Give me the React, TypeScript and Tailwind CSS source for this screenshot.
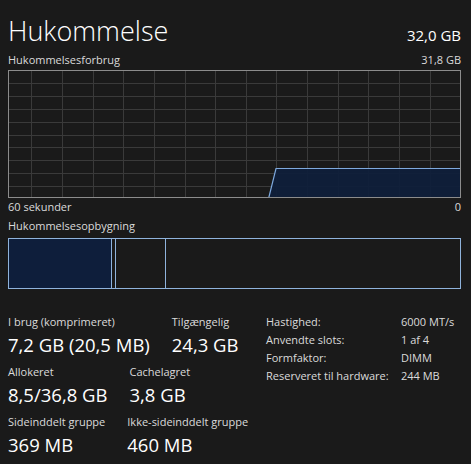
import React from 'react';

const font = { fontFamily: '"Open Sans", "Noto Sans", sans-serif' };

const Stat = ({ label, value }: { label: string; value: string }) => (
    <div className="flex flex-col">
        <span className="text-[11px] leading-[16px] text-[#dadada]">{label}</span>
        <span className="mt-[2px] text-[18.5px] leading-[26px] text-white">{value}</span>
    </div>
);

const UsageGraph = () => {
    const cols = [23, 54, 85, 115, 146, 177, 207, 238, 268, 299, 330, 360, 391, 422];
    const rows = [13, 26, 39, 52, 65, 77, 90, 103, 116];
    return (
        <svg width="453" height="128" className="block">
            {cols.map((x) => (
                <line key={'c' + x} x1={x + 0.5} y1="0" x2={x + 0.5} y2="128" stroke="#3a3a3a" strokeWidth="1" />
            ))}
            {rows.map((y) => (
                <line key={'r' + y} x1="0" y1={y + 0.5} x2="453" y2={y + 0.5} stroke="#3a3a3a" strokeWidth="1" />
            ))}
            <polygon points="260.7,128 268,98.5 453,98.5 453,128" fill="#0e1e3b" fillOpacity="0.92" />
            <polyline points="260.7,128 268,98.5 453,98.5" fill="none" stroke="#7ea9dd" strokeWidth="1.2" />
            <rect x="0.5" y="0.5" width="452" height="127" fill="none" stroke="#8c8c8c" strokeWidth="1" />
        </svg>
    );
};

const App: React.FC = () => {
    return (
        <div className="w-[471px] h-[464px] bg-[#1a1a1a] pl-[8px] pr-[10px] overflow-hidden" style={font}>
            <div className="flex items-baseline justify-between pt-[13px]">
                <span className="text-[27px] leading-[36px] font-light text-white">Hukommelse</span>
                <span className="text-[15px] leading-[20px] text-white">32,0 GB</span>
            </div>
            <div className="mt-[3px] flex justify-between text-[11px] leading-[16px] text-[#dadada]">
                <span>Hukommelsesforbrug</span>
                <span>31,8 GB</span>
            </div>
            <div className="mt-[2px]">
                <UsageGraph />
            </div>
            <div className="mt-[1px] flex justify-between text-[11px] leading-[16px] text-[#dadada]">
                <span>60 sekunder</span>
                <span>0</span>
            </div>
            <div className="mt-[3px] text-[11px] leading-[16px] text-[#dadada]">Hukommelsesopbygning</div>
            <div className="mt-[4px] flex h-[51px] border border-[#8fb3dc]">
                <div className="w-[103px] bg-[#0e1e3b] border-r border-[#8fb3dc]" />
                <div className="w-[4px] border-r border-[#8fb3dc]" />
                <div className="w-[50px] border-r border-[#8fb3dc]" />
                <div className="flex-1" />
            </div>
            <div className="mt-[25px] flex items-start">
                <div className="w-[258px] flex flex-col gap-[6px]">
                    <div className="flex gap-[22px]">
                        <Stat label="I brug (komprimeret)" value="7,2 GB (20,5 MB)" />
                        <Stat label="Tilgængelig" value="24,3 GB" />
                    </div>
                    <div className="flex gap-[22px]">
                        <Stat label="Allokeret" value="8,5/36,8 GB" />
                        <Stat label="Cachelagret" value="3,8 GB" />
                    </div>
                    <div className="flex gap-[22px]">
                        <Stat label="Sideinddelt gruppe" value="369 MB" />
                        <Stat label="Ikke-sideinddelt gruppe" value="460 MB" />
                    </div>
                </div>
                <div className="-mt-[1px] grid grid-cols-[135px_1fr] text-[11px] leading-[18px] text-[#dadada]">
                    <span>Hastighed:</span>
                    <span>6000 MT/s</span>
                    <span>Anvendte slots:</span>
                    <span>1 af 4</span>
                    <span>Formfaktor:</span>
                    <span>DIMM</span>
                    <span>Reserveret til hardware:</span>
                    <span>244 MB</span>
                </div>
            </div>
        </div>
    );
};

export default App;
